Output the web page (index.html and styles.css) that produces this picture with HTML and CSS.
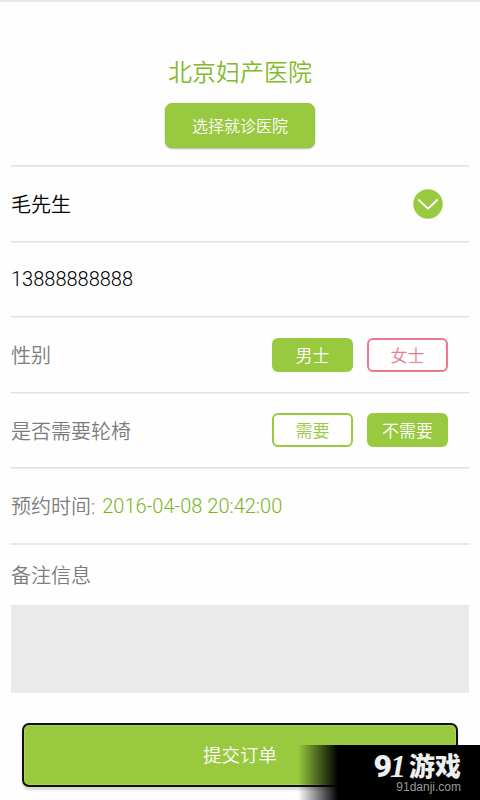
FILE: index.html
```html
<!DOCTYPE html>
<html lang="zh-CN">
<head>
    <meta charset="UTF-8">
    <title>预约挂号</title>
    <link rel="stylesheet" href="styles.css">
</head>
<body>
    <div class="container">
        <div class="hospital">
            <h1>北京妇产医院</h1>
            <button class="choose">选择就诊医院</button>
        </div>
        <div class="row">
            <span class="value">毛先生</span>
            <svg class="arrow" width="30" height="30" viewBox="0 0 30 30">
                <circle cx="15" cy="15" r="14.7" fill="#98c93f"/>
                <path d="M5.3 10.5L15 19.7L24.7 10.5" fill="none" stroke="#fff" stroke-width="1.8"/>
            </svg>
        </div>
        <div class="row">
            <span class="value">13888888888</span>
        </div>
        <div class="row">
            <span class="label">性别</span>
            <div class="options">
                <button class="option selected">男士</button>
                <button class="option pink">女士</button>
            </div>
        </div>
        <div class="row">
            <span class="label">是否需要轮椅</span>
            <div class="options">
                <button class="option">需要</button>
                <button class="option selected">不需要</button>
            </div>
        </div>
        <div class="row">
            <span class="label">预约时间:</span>
            <span class="time">2016-04-08 20:42:00</span>
        </div>
        <div class="remark">
            <div class="label">备注信息</div>
            <div class="remark-box"></div>
        </div>
        <button class="submit">提交订单</button>
    </div>
    <div class="watermark">
        <div class="brand"><span class="num">9<i>1</i></span><span class="game">游戏</span></div>
        <div class="site">91danji.com</div>
    </div>
</body>
</html>
```
FILE: styles.css
```css
body {
    margin: 0;
    height: 800px;
    overflow: hidden;
    position: relative;
    background-color: #fefefe;
    font-family: Roboto, "Noto Sans CJK SC", sans-serif;
    font-weight: 350;
    color: #000;
    box-sizing: border-box;
    border-top: 2px solid #e8e8e8;
}
button {
    font-family: inherit;
    font-weight: 350;
    padding: 0;
    box-sizing: border-box;
    color: white;
    background-color: #98c93f;
}
.container {
    padding: 0 11px;
}
.hospital {
    height: 163px;
    display: flex;
    flex-direction: column;
    align-items: center;
}
h1 {
    margin: 53px 0 12px;
    font-size: 24px;
    line-height: 36px;
    font-weight: 350;
    color: #82ba2b;
}
.choose {
    width: 150px;
    height: 45px;
    padding-bottom: 1px;
    border: 1px solid #94c63c;
    border-radius: 7px;
    font-size: 16px;
    box-shadow: 0 1px 2px rgba(0,0,0,0.3);
}
.row {
    height: 75.5px;
    box-sizing: border-box;
    border-top: 1px solid #e2e2e2;
    box-shadow: inset 0 1px #f0f0f0;
    padding-top: 1px;
    display: flex;
    align-items: center;
    font-size: 20px;
}
.label {
    font-size: 20px;
    color: #7c7c7c;
}
.arrow {
    margin-left: auto;
    margin-right: 26px;
}
.options {
    margin-left: auto;
    margin-right: 21px;
    display: flex;
    gap: 14px;
}
.option {
    width: 81px;
    height: 34px;
    padding-bottom: 1px;
    border: 2px solid #98c93f;
    border-radius: 6px;
    font-size: 17px;
    color: #98c93f;
    background-color: white;
}
.option.selected {
    color: white;
    background-color: #98c93f;
}
.option.pink {
    color: #e8798f;
    border-color: #e8798f;
}
.time {
    margin-left: 7px;
    color: #7ab51d;
}
.remark {
    border-top: 2px solid #e8e8e8;
    padding-top: 15px;
}
.remark .label {
    line-height: 32px;
}
.remark-box {
    margin-top: 13.5px;
    height: 88px;
    background-color: #eaeaea;
}
.submit {
    display: block;
    width: 436px;
    height: 64px;
    margin: 30px 0 0 11px;
    padding-bottom: 2px;
    border: 2px solid #111;
    border-radius: 7px;
    font-size: 18.5px;
    box-shadow: 0 3px 2px rgba(0,0,0,0.15), inset 0 0 0 1px #a7d552;
}
/* site badge over the bottom right corner */
.watermark {
    position: absolute;
    right: 0;
    bottom: 0;
    width: 182px;
    height: 55px;
    box-sizing: border-box;
    padding: 6px 19px 0 0;
    background: linear-gradient(to right, transparent, #000 40px);
    text-align: right;
}
.brand {
    display: flex;
    justify-content: flex-end;
    align-items: center;
    gap: 5px;
    height: 29px;
    color: #eee;
    font-weight: 900;
    line-height: 28px;
}
.num {
    font-size: 32px;
    letter-spacing: -2px;
}
.num i {
    font-family: "Liberation Serif", serif;
}
.game {
    font-family: "Noto Sans CJK SC", sans-serif;
    font-size: 26px;
    line-height: 26px;
    height: 28px;
}
.site {
    margin-top: 1px;
    font-family: "Liberation Sans", Arial, sans-serif;
    font-size: 12px;
    line-height: 12px;
    font-weight: 400;
    color: #999;
}
```
